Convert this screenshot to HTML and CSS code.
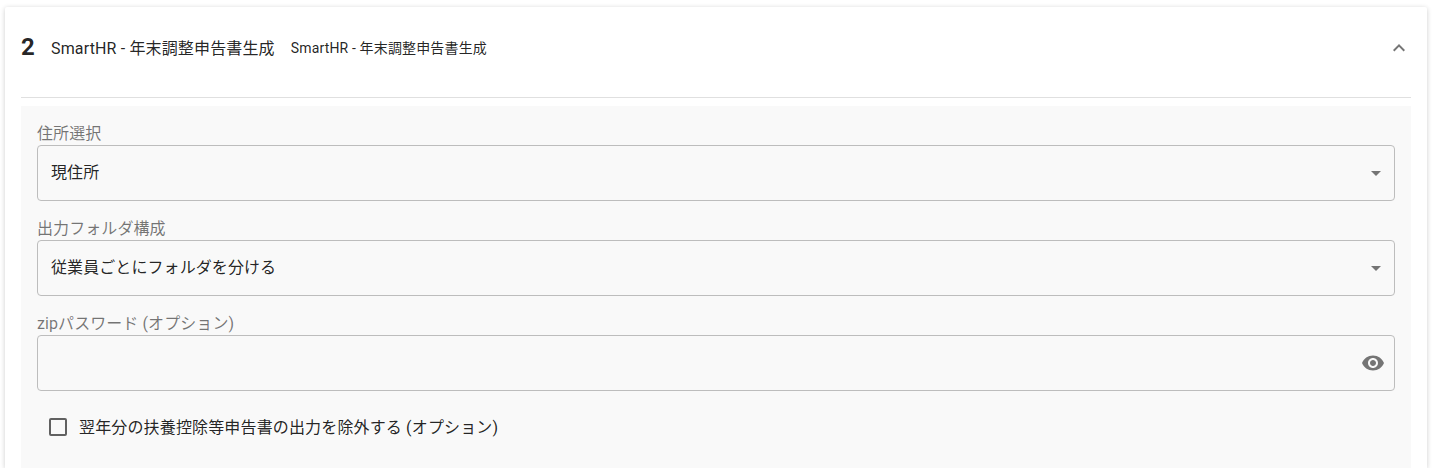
FILE: index.html
```html
<!DOCTYPE html>
<html lang="ja">

<head>
	<meta charset="UTF-8">
	<title>SmartHR - 年末調整申告書生成</title>
	<link rel="stylesheet" href="styles.css">
</head>

<body>
	<section class="card">
		<header class="cardHeader">
			<span class="stepNumber">2</span>
			<span class="stepTitle">SmartHR - 年末調整申告書生成</span>
			<span class="stepSubtitle">SmartHR - 年末調整申告書生成</span>
			<svg class="chevron" viewBox="0 0 24 24" width="24" height="24">
				<path d="M12 8l-6 6 1.41 1.41L12 10.83l4.59 4.58L18 14z" />
			</svg>
		</header>

		<div class="cardBody">
			<div class="panel">
				<div class="field">
					<label class="fieldLabel">住所選択</label>
					<div class="fieldBox">
						<span class="fieldValue">現住所</span>
						<span class="selectArrow"></span>
					</div>
				</div>

				<div class="field">
					<label class="fieldLabel">出力フォルダ構成</label>
					<div class="fieldBox">
						<span class="fieldValue">従業員ごとにフォルダを分ける</span>
						<span class="selectArrow"></span>
					</div>
				</div>

				<div class="field">
					<label class="fieldLabel">zipパスワード (オプション)</label>
					<div class="fieldBox">
						<span class="fieldValue"></span>
						<svg class="eye" viewBox="0 0 24 24" width="24" height="24">
							<path d="M12 4.5C7 4.5 2.73 7.61 1 12c1.73 4.39 6 7.5 11 7.5s9.27-3.11 11-7.5c-1.73-4.39-6-7.5-11-7.5zM12 17c-2.76 0-5-2.24-5-5s2.24-5 5-5 5 2.24 5 5-2.24 5-5 5zm0-8c-1.66 0-3 1.34-3 3s1.34 3 3 3 3-1.34 3-3-1.34-3-3-3z" />
						</svg>
					</div>
				</div>

				<div class="checkRow">
					<span class="checkBox"></span>
					<span class="checkText">翌年分の扶養控除等申告書の出力を除外する (オプション)</span>
				</div>
			</div>
		</div>
	</section>
</body>

</html>
```

FILE: styles.css
```css
* {
	margin: 0;
	padding: 0;
	box-sizing: border-box;
}

html,
body {
	height: 468px;
	overflow: hidden;
	background-color: #fff;
}

body {
	font-family: Roboto, "Noto Sans CJK JP", sans-serif;
	color: rgba(0, 0, 0, 0.87);
	letter-spacing: 0.00938em;
	padding: 7px 5px 0;
}

.card {
	background-color: #fff;
	height: 100%;
	border-radius: 2px 2px 0 0;
	box-shadow: 0 1px 5px rgba(0, 0, 0, 0.2);
	display: flex;
	flex-direction: column;
}

.cardHeader {
	height: 80px;
	margin-bottom: 10px;
	padding: 0 16px;
	display: flex;
	align-items: center;
	flex: none;
}

.stepNumber {
	font-size: 24px;
	font-weight: 700;
	width: 30px;
}

.stepTitle {
	font-size: 16px;
	margin-right: 16px;
}

.stepSubtitle {
	font-size: 14px;
	letter-spacing: 0.01071em;
	flex: 1;
}

.chevron {
	fill: #757575;
	margin-top: 2px;
}

.cardBody {
	margin: 0 16px;
	border-top: 1px solid #e0e0e0;
	padding-top: 8px;
	flex: 1;
	min-height: 0;
	display: flex;
}

.panel {
	background-color: #f9f9f9;
	padding: 17px 16px 0;
	flex: 1;
	display: flex;
	flex-direction: column;
	gap: 17px;
}

.fieldLabel {
	display: block;
	font-size: 16px;
	line-height: 22px;
	letter-spacing: 0.08px;
	color: rgba(0, 0, 0, 0.54);
}

.fieldBox {
	height: 56px;
	padding: 0 9px 0 13px;
	border: 1px solid #bdbdbd;
	border-radius: 4px;
	display: flex;
	align-items: center;
	justify-content: space-between;
}

.fieldValue {
	font-size: 16px;
	letter-spacing: 0.08px;
	margin-bottom: 4px;
}

.selectArrow {
	width: 0;
	height: 0;
	margin-right: 4px;
	border-left: 5px solid transparent;
	border-right: 5px solid transparent;
	border-top: 5px solid #757575;
}

.eye {
	fill: #757575;
}

.checkRow {
	display: flex;
	align-items: center;
	gap: 12px;
	padding: 6px 12px 8px;
}

.checkBox {
	width: 18px;
	height: 18px;
	margin-top: 2px;
	border: 2px solid #616161;
	border-radius: 2px;
}

.checkText {
	font-size: 16px;
}
```
